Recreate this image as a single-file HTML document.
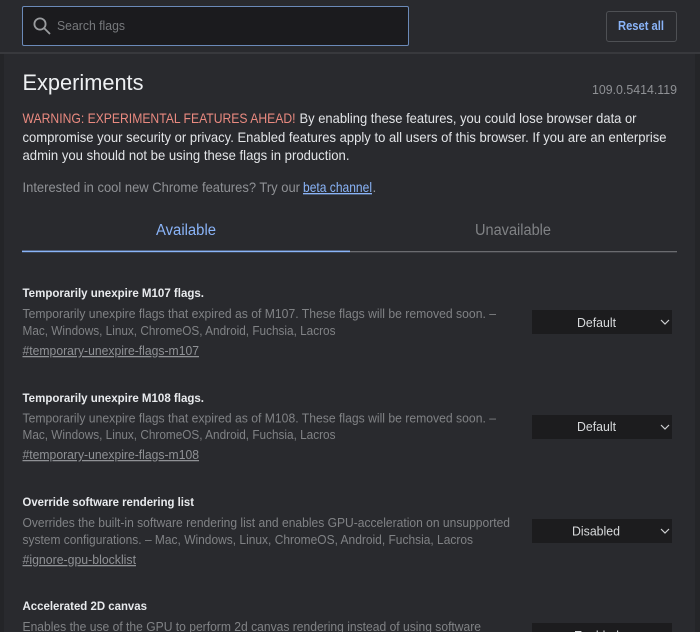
<!DOCTYPE html>
<html><head><meta charset="utf-8"><style>
html,body{margin:0;padding:0;width:700px;height:632px;overflow:hidden;background:#292a2e}
body{position:relative;font-family:"Liberation Sans",sans-serif}
.b{position:absolute}
.sel{position:absolute;left:532px;width:140px;height:24px;background:#1c1c1e}
svg.all{position:absolute;left:0;top:0}
svg.all text{font-family:"Liberation Sans",sans-serif}
.w{font-size:13.6px;fill:#e2e4e7}
.g{font-size:13.6px;fill:#8f9195}
.h{font-size:12.2px;font-weight:bold;fill:#e8eaed}
.d{font-size:12.6px;fill:#808285}
.l{font-size:12.6px;fill:#8f9195;text-decoration:underline}
.s{font-size:12.6px;fill:#d8dadc}
</style></head><body>
<div class="b" style="left:0;top:54px;width:4px;height:578px;background:#242528"></div>
<div class="b" style="left:695px;top:54px;width:5px;height:578px;background:#242528"></div>
<div class="b" style="left:0;top:52px;width:700px;height:2px;background:#38393d"></div>
<div class="b" style="left:22px;top:6px;width:385px;height:38px;background:#1b1b1e;border:1px solid #6b8ab8;border-radius:2px"></div>
<div class="b" style="left:606px;top:11px;width:69px;height:29px;border:1px solid #4e5054;border-radius:3px"></div>
<div class="sel" style="top:310px"></div>
<div class="sel" style="top:415px"></div>
<div class="sel" style="top:519px"></div>
<div class="sel" style="top:623px"></div>
<svg class="all" width="700" height="632" viewBox="0 0 700 632">
<rect x="22" y="250.6" width="328" height="1.6" fill="#8ab4f8"/>
<rect x="350" y="251" width="327" height="1.3" fill="#6a6b6f"/>
<g fill="none" stroke="#9a9c9f" stroke-width="1.8"><circle cx="40" cy="24" r="5.6"/><path d="M44 28l6 6"/></g>
<text x="57" y="30" font-size="13" fill="#77797c" textLength="68" lengthAdjust="spacingAndGlyphs">Search flags</text>
<text x="618" y="30" font-size="12.5" font-weight="bold" fill="#8ab4f8" textLength="46" lengthAdjust="spacingAndGlyphs">Reset all</text>
<text x="22.5" y="90" font-size="22" fill="#eef0f2" textLength="121" lengthAdjust="spacingAndGlyphs">Experiments</text>
<text x="592" y="94" font-size="12.5" fill="#8f9195" textLength="85" lengthAdjust="spacingAndGlyphs">109.0.5414.119</text>
<text class="w" x="22.5" y="123" style="fill:#ea8a80" textLength="273" lengthAdjust="spacingAndGlyphs">WARNING: EXPERIMENTAL FEATURES AHEAD!</text>
<text class="w" x="299.5" y="123" textLength="337" lengthAdjust="spacingAndGlyphs">By enabling these features, you could lose browser data or</text>
<text class="w" x="22.5" y="142" textLength="644" lengthAdjust="spacingAndGlyphs">compromise your security or privacy. Enabled features apply to all users of this browser. If you are an enterprise</text>
<text class="w" x="22.5" y="160" textLength="327" lengthAdjust="spacingAndGlyphs">admin you should not be using these flags in production.</text>
<text class="g" x="22.5" y="192" textLength="277.5" lengthAdjust="spacingAndGlyphs">Interested in cool new Chrome features? Try our</text>
<text class="g" x="303" y="192" style="fill:#8ab4f8;text-decoration:underline" textLength="69" lengthAdjust="spacingAndGlyphs">beta channel</text>
<text class="g" x="372.5" y="192">.</text>
<text x="156" y="235" font-size="15.5" fill="#8ab4f8" textLength="60" lengthAdjust="spacingAndGlyphs">Available</text>
<text x="475" y="235" font-size="15.5" fill="#808285" textLength="76" lengthAdjust="spacingAndGlyphs">Unavailable</text>

<text class="h" x="22.5" y="297" textLength="181.5" lengthAdjust="spacingAndGlyphs">Temporarily unexpire M107 flags.</text>
<text class="d" x="22.5" y="318" textLength="473.5" lengthAdjust="spacingAndGlyphs">Temporarily unexpire flags that expired as of M107. These flags will be removed soon. –</text>
<text class="d" x="22.5" y="335" textLength="313" lengthAdjust="spacingAndGlyphs">Mac, Windows, Linux, ChromeOS, Android, Fuchsia, Lacros</text>
<text class="l" x="22.5" y="355" textLength="176.5" lengthAdjust="spacingAndGlyphs">#temporary-unexpire-flags-m107</text>
<text class="s" x="577" y="327" textLength="39" lengthAdjust="spacingAndGlyphs">Default</text>

<text class="h" x="22.5" y="402" textLength="181.5" lengthAdjust="spacingAndGlyphs">Temporarily unexpire M108 flags.</text>
<text class="d" x="22.5" y="422.500" textLength="473.5" lengthAdjust="spacingAndGlyphs">Temporarily unexpire flags that expired as of M108. These flags will be removed soon. –</text>
<text class="d" x="22.5" y="439" textLength="313" lengthAdjust="spacingAndGlyphs">Mac, Windows, Linux, ChromeOS, Android, Fuchsia, Lacros</text>
<text class="l" x="22.5" y="459" textLength="176.5" lengthAdjust="spacingAndGlyphs">#temporary-unexpire-flags-m108</text>
<text class="s" x="577" y="431" textLength="39" lengthAdjust="spacingAndGlyphs">Default</text>

<text class="h" x="22.5" y="506" textLength="171.5" lengthAdjust="spacingAndGlyphs">Override software rendering list</text>
<text class="d" x="22.5" y="527" textLength="487.5" lengthAdjust="spacingAndGlyphs">Overrides the built-in software rendering list and enables GPU-acceleration on unsupported</text>
<text class="d" x="22.5" y="544" textLength="450.5" lengthAdjust="spacingAndGlyphs">system configurations. – Mac, Windows, Linux, ChromeOS, Android, Fuchsia, Lacros</text>
<text class="l" x="22.5" y="564" textLength="113.5" lengthAdjust="spacingAndGlyphs">#ignore-gpu-blocklist</text>
<text class="s" x="572" y="535.500" textLength="48" lengthAdjust="spacingAndGlyphs">Disabled</text>

<text class="h" x="22.5" y="610" textLength="124.5" lengthAdjust="spacingAndGlyphs">Accelerated 2D canvas</text>
<text class="d" x="22.5" y="631" textLength="458.5" lengthAdjust="spacingAndGlyphs">Enables the use of the GPU to perform 2d canvas rendering instead of using software</text>
<text class="s" x="574" y="640" textLength="45" lengthAdjust="spacingAndGlyphs">Enabled</text>

<g fill="none" stroke="#cfd1d3" stroke-width="1.2">
<path d="M661 320l4 4 4-4"/>
<path d="M661 425l4 4 4-4"/>
<path d="M661 529l4 4 4-4"/>
</g>
</svg>
</body></html>
